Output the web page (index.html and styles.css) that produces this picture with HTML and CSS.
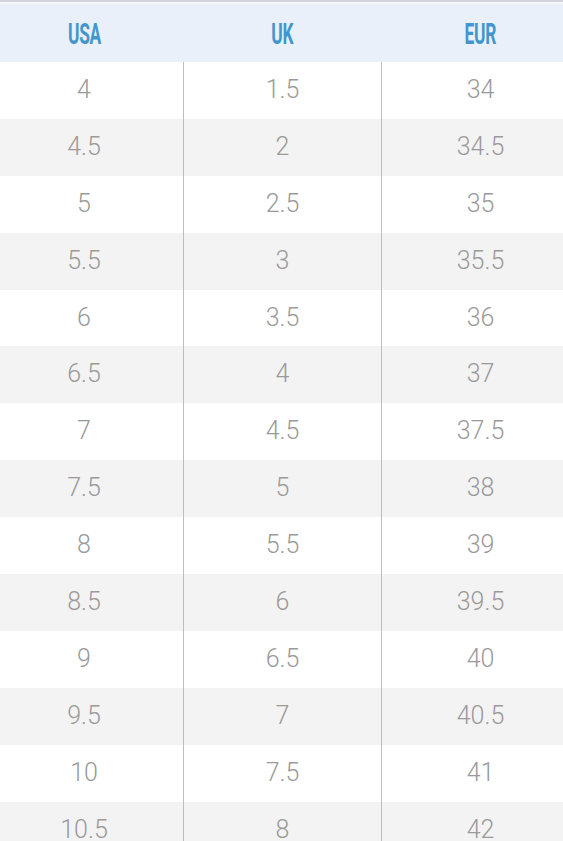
FILE: index.html
```html
<!DOCTYPE html>
<html>
<head>
<meta charset="utf-8">
<link rel="stylesheet" href="styles.css">
</head>
<body>
<div class="chart">
  <div class="head">
    <div class="hcell"><span>USA</span></div>
    <div class="hcell"><span>UK</span></div>
    <div class="hcell"><span>EUR</span></div>
  </div>
  <div class="rows">
    <div class="row"><div class="cell">4</div><div class="cell">1.5</div><div class="cell">34</div></div>
    <div class="row"><div class="cell">4.5</div><div class="cell">2</div><div class="cell">34.5</div></div>
    <div class="row"><div class="cell">5</div><div class="cell">2.5</div><div class="cell">35</div></div>
    <div class="row"><div class="cell">5.5</div><div class="cell">3</div><div class="cell">35.5</div></div>
    <div class="row"><div class="cell">6</div><div class="cell">3.5</div><div class="cell">36</div></div>
    <div class="row"><div class="cell">6.5</div><div class="cell">4</div><div class="cell">37</div></div>
    <div class="row"><div class="cell">7</div><div class="cell">4.5</div><div class="cell">37.5</div></div>
    <div class="row"><div class="cell">7.5</div><div class="cell">5</div><div class="cell">38</div></div>
    <div class="row"><div class="cell">8</div><div class="cell">5.5</div><div class="cell">39</div></div>
    <div class="row"><div class="cell">8.5</div><div class="cell">6</div><div class="cell">39.5</div></div>
    <div class="row"><div class="cell">9</div><div class="cell">6.5</div><div class="cell">40</div></div>
    <div class="row"><div class="cell">9.5</div><div class="cell">7</div><div class="cell">40.5</div></div>
    <div class="row"><div class="cell">10</div><div class="cell">7.5</div><div class="cell">41</div></div>
    <div class="row"><div class="cell">10.5</div><div class="cell">8</div><div class="cell">42</div></div>
  </div>
</div>
</body>
</html>
```

FILE: styles.css
```css
html, body {
  margin: 0;
  padding: 0;
  background: #ffffff;
  overflow: hidden;
}
.chart {
  width: 594px;
  margin-left: -15px;
}
.head {
  display: grid;
  grid-template-columns: 198px 198px 198px;
  height: 60px;
  background: #eaf0f9;
  border-top: 2px solid #d4d3e0;
  box-shadow: inset 0 2px 0 #f6f6fc;
}
.hcell {
  display: flex;
  align-items: center;
  justify-content: center;
  padding-top: 4px;
}
.hcell span {
  display: inline-block;
  font-family: Roboto, "Liberation Sans", sans-serif;
  font-weight: 700;
  font-size: 29px;
  color: #4396cb;
  transform: scaleX(0.6);
  letter-spacing: -0.5px;
}
.rows {
  display: flex;
  flex-direction: column;
}
.row {
  display: grid;
  grid-template-columns: 198px 198px 198px;
  height: 56.9px;
  background: #ffffff;
}
.row:nth-child(even) {
  background: #f3f3f3;
}
.cell {
  display: flex;
  align-items: center;
  justify-content: center;
  font-family: Roboto, "Liberation Sans", sans-serif;
  font-weight: 300;
  font-size: 25px;
  color: #9a9a9a;
  padding-bottom: 2px;
}
.cell + .cell {
  border-left: 1px solid #bdbdbd;
}
```
